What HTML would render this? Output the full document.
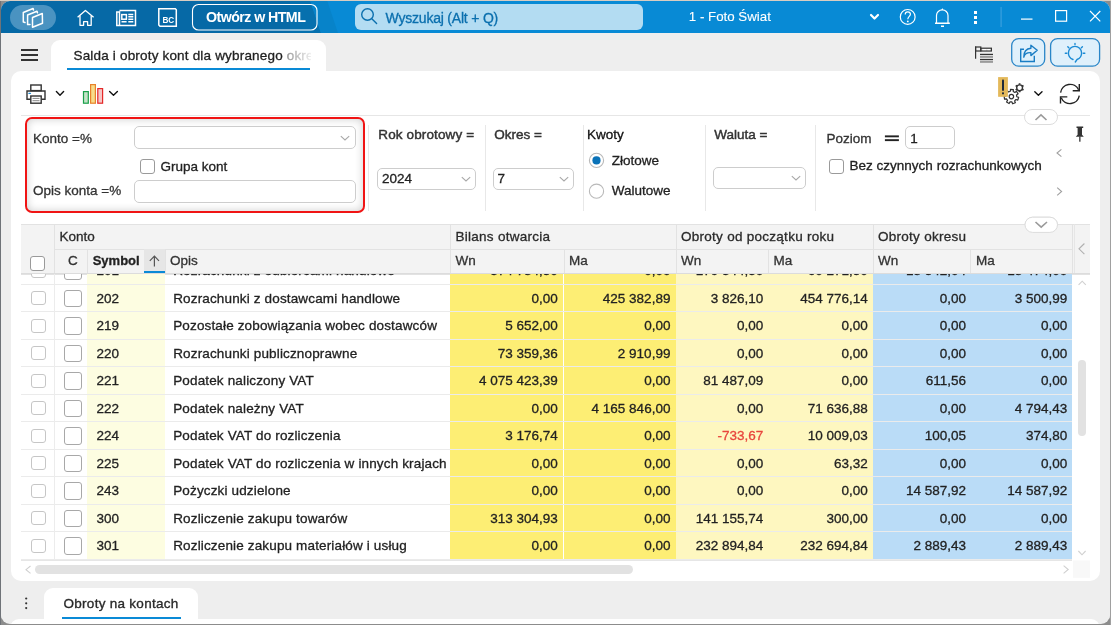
<!DOCTYPE html>
<html><head><meta charset="utf-8">
<style>
*{box-sizing:border-box;margin:0;padding:0}
html,body{width:1111px;height:625px;overflow:hidden;background:linear-gradient(#d8cdc2 0,#d8cdc2 1px,transparent 1px),linear-gradient(90deg,#6f7378 0,#6f7378 1px,transparent 1px,transparent 1110px,#a0a0a0 1110px),#8c8c8c;font-family:"Liberation Sans",sans-serif;font-size:13.5px;color:#222}
.a{position:absolute}
#win{position:absolute;left:1px;top:1px;width:1109px;height:623px;border-radius:9px;overflow:hidden;background:#eeeeee}
#c{position:absolute;left:-1px;top:-1px;width:1111px;height:625px;will-change:transform}
.t{position:absolute;white-space:nowrap;line-height:16px;height:16px;-webkit-text-stroke:0.3px currentColor}
svg.ov{position:absolute;left:0;top:0}
.inp{position:absolute;background:#fff;border:1px solid #cdcdcd;border-radius:5px}
.sep{position:absolute;width:1px;background:#e8e8e8}
.chk{position:absolute;border:1px solid #8c8c8c;border-radius:3px;background:#fff}
</style></head><body>
<div id="win"><div id="c">
<svg class="ov" width="1111" height="34">
<rect x="0" y="0" width="1111" height="33" fill="#088ad5"/>
<polygon points="0,0 310,0 321,33 0,33" fill="#0670ae"/>
<rect x="0" y="0" width="290" height="33" fill="#0669a6"/>
<polygon points="310,0 327,0 338,33 321,33" fill="#0783c9"/>
<rect x="10" y="5" width="46" height="25" rx="12.5" fill="#4a93c1"/>
<g fill="none" stroke="#fff" stroke-width="1.5" stroke-linejoin="round" stroke-linecap="round">
<path d="M32.5,17.5 L42.3,13.5 L42.5,23.3 L32.5,27.3 Z"/>
<path d="M30,24.4 L27.6,24.6 L27.6,15 L37,11.3 L37.5,12.7"/>
<path d="M25,22.5 L23.3,22.1 L23.3,12.5 L33.1,8.5 L33.5,10"/>
</g>
<g fill="none" stroke="#fff" stroke-width="1.3" stroke-linejoin="round">
<path d="M77.6,17.3 L85.4,10.5 L93.6,17.3"/>
<path d="M80,15.6 V25.3 H83.6 V21.7 H87.6 V25.3 H91.2 V15.6"/>
</g>
<g fill="none" stroke="#fff" stroke-width="1.5">
<path d="M119.5,10.5 H135.5 V25.5 H116.8 V12 H119.5 V25.5"/>
<rect x="121.8" y="14.6" width="4.6" height="4.6"/>
<path d="M128.3,14.4 H133.3 M128.3,16.8 H133.3 M128.3,19.3 H133.3 M121.5,21.8 H126.6 M128.3,21.8 H133.3"/>
<path d="M158.8,8.8 H175.3 L176.3,9.8 V26.2 H160 L158.8,25 Z"/>
</g>
<text x="168.3" y="23" fill="#fff" font-family="Liberation Sans" font-weight="bold" font-size="8.2" text-anchor="middle">BC</text>
<rect x="192.5" y="4.5" width="124.5" height="25.5" rx="6" fill="none" stroke="#fff" stroke-width="1.1"/>
<rect x="355" y="4" width="288" height="26" rx="6" fill="#b3dcf2"/>
<g fill="none" stroke="#0a6fae" stroke-width="1.4" stroke-linecap="round">
<circle cx="367.5" cy="14.5" r="5.8"/>
<path d="M371.8,18.8 L376.6,23.6"/>
</g>
<path d="M871,15 L874.5,18.5 L878,15" fill="none" stroke="#fff" stroke-width="2.2" stroke-linecap="round" stroke-linejoin="round"/>
<g fill="none" stroke="#fff" stroke-width="1.2">
<circle cx="907.7" cy="16.9" r="7.4"/>
<path d="M905.2,14.5 C905.2,12.5 906.4,11.8 907.8,11.8 C909.4,11.8 910.4,12.8 910.4,14.2 C910.4,16.2 907.8,16.6 907.8,19.2"/>
<path d="M936.5,23 V15.5 C936.5,12.2 939.2,9.9 942.3,9.9 C945.4,9.9 948,12.2 948,15.5 V23"/>
</g>
<circle cx="907.8" cy="21.4" r="0.9" fill="#fff"/>
<path d="M935,22.6 H949.8 V24.1 H935 Z M941,25.6 H944 V26.9 H941 Z M941.4,9.9 L942.3,8 L943.2,9.9 Z" fill="#fff"/>
<rect x="974" y="11" width="3" height="3" fill="#fff"/>
<rect x="974" y="16" width="3" height="3" fill="#fff"/>
<rect x="974" y="21" width="3" height="3" fill="#fff"/>
<rect x="1000.5" y="7" width="1.2" height="20" fill="#3aa0de"/>
<rect x="1021" y="18.5" width="11.5" height="1.2" fill="#fff"/>
<rect x="1055.6" y="10.6" width="11" height="10.6" fill="none" stroke="#fff" stroke-width="1.2"/>
<path d="M1090,11 L1100.3,21.3 M1100.3,11 L1090,21.3" stroke="#fff" stroke-width="1.2"/>
</svg>
<div class="t" style="left:206.00px;top:9.38px;font-size:14.2px;color:#fff;font-weight:bold;letter-spacing:-0.55px;-webkit-text-stroke:0">Otwórz w HTML</div><div class="t" style="left:385.50px;top:9.95px;font-size:14px;color:#0a6fae;font-weight:normal;letter-spacing:-0.2px">Wyszukaj (Alt + Q)</div><div class="t" style="left:688.80px;top:9.09px;font-size:13.3px;color:#fff;font-weight:normal;-webkit-text-stroke:0.1px #fff">1 - Foto Świat</div><div class="a" style="left:11px;top:71px;width:1089px;height:510px;background:#fff;border-radius:10px"></div>
<div class="a" style="left:51px;top:40px;width:275px;height:40px;background:#fff;border-radius:9px 9px 0 0"></div>
<div class="a" style="left:326px;top:33px;width:785px;height:38px;background:#eeeeee;border-bottom-left-radius:9px"></div>
<div class="a" style="left:67px;top:67.5px;width:243px;height:2px;background:#0a8ad6"></div>
<div class="t" style="left:73.50px;top:47.82px;font-size:13.5px;color:#222;font-weight:normal;letter-spacing:0.18px;width:237px;overflow:hidden;-webkit-mask-image:linear-gradient(90deg,#000 0,#000 208px,rgba(0,0,0,.45) 214px,rgba(0,0,0,.08) 237px)">Salda i obroty kont dla wybranego okre</div><svg class="ov" width="1111" height="130">
<rect x="21" y="49" width="17" height="2" fill="#333"/>
<rect x="21" y="54" width="17" height="2" fill="#333"/>
<rect x="21" y="59" width="17" height="2" fill="#333"/>
<!-- tree icon -->
<g fill="none" stroke="#333" stroke-width="1.2">
<path d="M975.6,46.5 V58.8"/>
<rect x="975.6" y="47" width="5.2" height="4"/>
<rect x="980.8" y="48.2" width="10.6" height="2.8"/>
</g>
<path d="M983,49.6 H986 M987.5,49.6 H990" stroke="#fff" stroke-width="1"/>
<rect x="980" y="53.8" width="13" height="1.3" fill="#333"/>
<rect x="980" y="56.3" width="13" height="1.3" fill="#777"/>
<rect x="980" y="58.9" width="13" height="1.3" fill="#333"/>
<rect x="980" y="61.3" width="13" height="1.3" fill="#777"/>
<!-- share btn -->
<rect x="1011.7" y="38.6" width="33" height="27.6" rx="7" fill="#dff0fb" stroke="#2a86c8" stroke-width="1.3"/>
<rect x="1050.6" y="38.6" width="49" height="27.6" rx="7" fill="#dff0fb" stroke="#2a86c8" stroke-width="1.3"/>
<g fill="none" stroke="#1a7dc4" stroke-width="1.4">
<path d="M1024,49.2 H1020.7 V61.5 H1034.3 V55.8"/>
<path d="M1023.8,57.2 C1024.6,53.6 1027.2,52.4 1030.9,52.6 L1030.9,55.6 L1037.2,50.3 L1030.9,45.2 L1030.9,48.3 C1026.4,48.6 1023.8,51.6 1023.8,57.2 Z" stroke-linejoin="round"/>
</g>
<g fill="none" stroke="#1a8ad4" stroke-width="1.4" stroke-linecap="round">
<path d="M1075.3,62 L1077,59.5 C1079.8,58.5 1081.6,56 1081.6,53 C1081.6,49.2 1078.6,46.4 1075,46.4 C1071.4,46.4 1068.4,49.2 1068.4,53 C1068.4,56 1070.3,58.5 1073,59.5"/>
<path d="M1075,43.4 V44.6 M1065.3,53.3 H1066.8 M1083.3,53.3 H1084.8 M1067.8,46.8 L1068.8,47.8 M1082.4,46.8 L1081.4,47.8"/>
</g>
<!-- printer -->
<g fill="none" stroke="#333" stroke-width="1.4">
<rect x="30.8" y="85" width="10.4" height="5.6"/>
<path d="M30.5,99.3 H27 V91 H45 V99.3 H41.5"/>
<rect x="30.8" y="96" width="10.4" height="7.2"/>
</g>
<path d="M32.5,98.4 H39.5 M32.5,100.7 H39.5" stroke="#888" stroke-width="1"/>
<rect x="28.3" y="92.8" width="2.7" height="1.2" rx="0.6" fill="#1a8ad4"/>
<g fill="none" stroke="#111" stroke-width="1.4" stroke-linecap="round" stroke-linejoin="round">
<path d="M56.4,91.6 L60,95.2 L63.6,91.6"/>
<path d="M109.6,91.6 L113.5,95.3 L117.4,91.6"/>
<path d="M1034.8,91.8 L1038.4,95.2 L1042,91.8"/>
</g>
<!-- chart -->
<rect x="83.5" y="91.6" width="4.8" height="11.6" fill="#c5e3c8" stroke="#1aa04a" stroke-width="1.2"/>
<rect x="90.6" y="84.6" width="4.8" height="18.6" fill="#f7dd8a" stroke="#e8822a" stroke-width="1.2"/>
<rect x="97.8" y="88.6" width="4.8" height="14.6" fill="#f5c6c6" stroke="#e42828" stroke-width="1.2"/>
<!-- gears -->
<g fill="none" stroke="#333" stroke-width="1.2">
<circle cx="1011.4" cy="96.6" r="2.2"/>
</g>
<path d="M1016.80,96.74 L1018.66,97.31 L1017.80,100.11 L1015.94,99.53 L1014.65,100.91 L1015.37,102.73 L1012.64,103.79 L1011.94,101.97 L1010.06,101.83 L1009.09,103.52 L1006.55,102.06 L1007.53,100.37 L1006.47,98.81 L1004.54,99.11 L1004.11,96.21 L1006.04,95.93 L1006.60,94.13 L1005.16,92.80 L1007.16,90.66 L1008.59,91.99 L1010.34,91.31 L1010.48,89.36 L1013.40,89.58 L1013.25,91.53 L1014.88,92.47 L1016.49,91.37 L1018.14,93.79 L1016.52,94.88 Z" fill="none" stroke="#333" stroke-width="1.2" stroke-linejoin="round"/>
<circle cx="1019.6" cy="87.8" r="2.9" fill="#fff" stroke="#333" stroke-width="1.4"/><path d="M1022.20,89.30 L1023.50,90.05 M1019.60,90.80 L1019.60,92.30 M1017.00,89.30 L1015.70,90.05 M1017.00,86.30 L1015.70,85.55 M1019.60,84.80 L1019.60,83.30 M1022.20,86.30 L1023.50,85.55" stroke="#333" stroke-width="1.8"/>

<rect x="998.1" y="77.1" width="9.8" height="19.7" fill="#e4b95a"/>
<rect x="1002" y="79.6" width="2" height="11.3" rx="0.8" fill="#1e2a3a"/>
<rect x="1002" y="92.2" width="2" height="2.2" rx="0.8" fill="#1e2a3a"/>
<!-- refresh -->
<g fill="none" stroke="#222" stroke-width="1.4">
<path d="M1060.6,92.6 A9.5,9.5 0 0 1 1078.6,89.8"/>
<path d="M1079.3,84.1 V90.8 H1072.7"/>
<path d="M1079.3,95.6 A9.5,9.5 0 0 1 1061.2,97.8"/>
<path d="M1060.5,103.6 V96.9 H1067.3"/>
</g>
<!-- filter top line + collapse pill -->
<rect x="21" y="115" width="1069" height="1" fill="#e6e6e6"/>
<rect x="1024.5" y="109.5" width="33" height="15" rx="7.5" fill="#fff" stroke="#dcdcdc" stroke-width="1"/>
<path d="M1035.5,120 L1041,114.8 L1046.5,120" fill="none" stroke="#9a9a9a" stroke-width="1.6"/>
</svg>
<div class="a" style="left:24.5px;top:117px;width:340px;height:96px;border:2px solid #f01414;border-radius:7px;box-shadow:inset 0 0 8px rgba(0,0,0,.2)"></div><div class="t" style="left:33.00px;top:130.52px;font-size:13.5px;color:#333;font-weight:normal;">Konto =%</div><div class="inp" style="left:133.5px;top:126.3px;width:222.2px;height:23.200000000000003px"></div><svg class="ov" style="left:340.2px;top:133.9px" width="10" height="8"><path d="M0.8,2.2 L5,6 L9.2,2.2" fill="none" stroke="#a8a8a8" stroke-width="1.1"/></svg><div class="chk" style="left:140px;top:159.4px;width:14.5px;height:14.5px;border-radius:3px;border-color:#9a9a9a"></div><div class="t" style="left:160.50px;top:158.82px;font-size:13.5px;color:#222;font-weight:normal;">Grupa kont</div><div class="t" style="left:33.00px;top:183.22px;font-size:13.5px;color:#333;font-weight:normal;">Opis konta =%</div><div class="inp" style="left:133.5px;top:179.5px;width:222.2px;height:23.0px"></div><div class="sep" style="left:368px;top:124.6px;height:86.4px;background:#e8e8e8"></div><div class="t" style="left:378.30px;top:127.22px;font-size:13.5px;color:#333;font-weight:normal;-webkit-text-stroke:0.45px #333;letter-spacing:0.12px">Rok obrotowy =</div><div class="inp" style="left:377.3px;top:167.5px;width:99.19999999999999px;height:22.19999999999999px"></div><svg class="ov" style="left:461.0px;top:174.6px" width="10" height="8"><path d="M0.8,2.2 L5,6 L9.2,2.2" fill="none" stroke="#a8a8a8" stroke-width="1.1"/></svg><div class="t" style="left:382.00px;top:171.02px;font-size:13.5px;color:#222;font-weight:normal;">2024</div><div class="sep" style="left:484.5px;top:124.6px;height:86.4px;background:#e8e8e8"></div><div class="t" style="left:494.30px;top:127.22px;font-size:13.5px;color:#333;font-weight:normal;-webkit-text-stroke:0.45px #333">Okres =</div><div class="inp" style="left:493.4px;top:167.5px;width:81.0px;height:22.19999999999999px"></div><svg class="ov" style="left:558.9px;top:174.6px" width="10" height="8"><path d="M0.8,2.2 L5,6 L9.2,2.2" fill="none" stroke="#a8a8a8" stroke-width="1.1"/></svg><div class="t" style="left:497.50px;top:171.02px;font-size:13.5px;color:#222;font-weight:normal;">7</div><div class="sep" style="left:582.5px;top:124.6px;height:86.4px;background:#e8e8e8"></div><div class="t" style="left:587.00px;top:127.22px;font-size:13.5px;color:#111;font-weight:normal;">Kwoty</div><svg class="ov" width="1111" height="240">
<circle cx="596.5" cy="160.4" r="7.1" fill="#fff" stroke="#b9b9b9" stroke-width="1.1"/>
<circle cx="596.5" cy="160.4" r="4.1" fill="#0a72b8"/>
<circle cx="596.5" cy="191.2" r="7.1" fill="#fff" stroke="#b9b9b9" stroke-width="1.1"/>
<rect x="884.9" y="135.4" width="14" height="1.9" fill="#222"/>
<rect x="884.9" y="139.2" width="14" height="1.9" fill="#222"/>
<path d="M1061.4,149.3 L1057,153 L1061.4,156.7" fill="none" stroke="#a0a0a0" stroke-width="1.1"/>
<path d="M1057.2,187.6 L1061.6,191.5 L1057.2,195.4" fill="none" stroke="#a0a0a0" stroke-width="1.1"/>
<path d="M1076.5,126.5 H1083.2 V128 H1082 V134.8 L1083.8,136.8 H1075.8 L1077.6,134.8 V128 H1076.5 Z" fill="#333"/>
<rect x="1079.2" y="136.5" width="1.3" height="5.2" fill="#333"/>
<rect x="1025" y="217.2" width="32.5" height="15.2" rx="7.6" fill="#fff" stroke="#dcdcdc" stroke-width="1"/>
<path d="M1035.5,222 L1041.2,227.2 L1047,222" fill="none" stroke="#9a9a9a" stroke-width="1.6"/>
</svg>
<div class="t" style="left:611.70px;top:152.72px;font-size:13.5px;color:#222;font-weight:normal;">Złotowe</div><div class="t" style="left:611.70px;top:183.32px;font-size:13.5px;color:#222;font-weight:normal;">Walutowe</div><div class="sep" style="left:704.6px;top:124.6px;height:86.4px;background:#e8e8e8"></div><div class="t" style="left:714.30px;top:126.82px;font-size:13.5px;color:#333;font-weight:normal;-webkit-text-stroke:0.45px #333">Waluta =</div><div class="inp" style="left:713.2px;top:167.3px;width:93.29999999999995px;height:22.19999999999999px"></div><svg class="ov" style="left:791.0px;top:174.4px" width="10" height="8"><path d="M0.8,2.2 L5,6 L9.2,2.2" fill="none" stroke="#a8a8a8" stroke-width="1.1"/></svg><div class="sep" style="left:814.5px;top:124.6px;height:86.4px;background:#e8e8e8"></div><div class="t" style="left:826.60px;top:130.82px;font-size:13.5px;color:#333;font-weight:normal;">Poziom</div><div class="inp" style="left:905.3px;top:126.2px;width:50.10000000000002px;height:23.10000000000001px"></div><div class="t" style="left:910.30px;top:131.02px;font-size:13.5px;color:#222;font-weight:normal;">1</div><div class="chk" style="left:829.3px;top:159.4px;width:14.5px;height:14.5px;border-radius:3px;border-color:#9a9a9a"></div><div class="t" style="left:849.60px;top:158.42px;font-size:13.5px;color:#222;font-weight:normal;">Bez czynnych rozrachunkowych</div><div class="a" style="left:21px;top:224.3px;width:1069px;height:49.69999999999999px;background:#f3f3f3"></div><div class="a" style="left:21px;top:224.3px;width:1069.00px;height:1px;background:#e2e2e2"></div><div class="a" style="left:54.4px;top:248.5px;width:1017.60px;height:1px;background:#e2e2e2"></div><div class="a" style="left:21px;top:273.5px;width:1069.00px;height:1px;background:#e2e2e2"></div><div class="a" style="left:54.4px;top:224.3px;width:1px;height:49.70px;background:#e2e2e2"></div><div class="a" style="left:450.2px;top:224.3px;width:1px;height:49.70px;background:#e2e2e2"></div><div class="a" style="left:675.5px;top:224.3px;width:1px;height:49.70px;background:#e2e2e2"></div><div class="a" style="left:872.5px;top:224.3px;width:1px;height:49.70px;background:#e2e2e2"></div><div class="a" style="left:86.7px;top:248.5px;width:1px;height:25.50px;background:#e2e2e2"></div><div class="a" style="left:164.8px;top:248.5px;width:1px;height:25.50px;background:#e2e2e2"></div><div class="a" style="left:563.7px;top:248.5px;width:1px;height:25.50px;background:#e2e2e2"></div><div class="a" style="left:768.3px;top:248.5px;width:1px;height:25.50px;background:#e2e2e2"></div><div class="a" style="left:970.4px;top:248.5px;width:1px;height:25.50px;background:#e2e2e2"></div><div class="a" style="left:1072px;top:224.3px;width:1px;height:49.70px;background:#e2e2e2"></div><div class="a" style="left:1073.5px;top:224.3px;width:1px;height:49.70px;background:#e6e6e6"></div><div class="a" style="left:144px;top:249px;width:20.8px;height:24.5px;background:#e6e6e6"></div><div class="a" style="left:144px;top:270.8px;width:20.8px;height:2.4px;background:#0a8ad6"></div><svg class="ov" width="1111" height="290">
<path d="M154.4,266.5 V256.3 M149.8,260.8 L154.4,256.2 L159,260.8" fill="none" stroke="#555" stroke-width="1.2"/>
<path d="M1084.4,243.5 L1079,248.8 L1084.4,254.2" fill="none" stroke="#b0b0b0" stroke-width="1.1"/>
</svg><div class="chk" style="left:30.3px;top:256px;width:14.8px;height:14.8px;border-radius:3px;border-color:#9a9a9a"></div><div class="t" style="left:59.40px;top:228.82px;font-size:13.5px;color:#2a2a2a;font-weight:normal;-webkit-text-stroke:0.3px #2a2a2a">Konto</div><div class="t" style="left:455.50px;top:228.82px;font-size:13.5px;color:#2a2a2a;font-weight:normal;-webkit-text-stroke:0.3px #2a2a2a;letter-spacing:0.27px">Bilans otwarcia</div><div class="t" style="left:681.00px;top:228.82px;font-size:13.5px;color:#2a2a2a;font-weight:normal;-webkit-text-stroke:0.3px #2a2a2a;letter-spacing:0.27px">Obroty od początku roku</div><div class="t" style="left:878.00px;top:228.82px;font-size:13.5px;color:#2a2a2a;font-weight:normal;-webkit-text-stroke:0.3px #2a2a2a;letter-spacing:0.27px">Obroty okresu</div><div class="t" style="left:68.00px;top:253.02px;font-size:13.5px;color:#333;font-weight:normal;">C</div><div class="t" style="left:92.70px;top:253.20px;font-size:13px;color:#222;font-weight:bold;">Symbol</div><div class="t" style="left:170.00px;top:253.02px;font-size:13.5px;color:#333;font-weight:normal;">Opis</div><div class="t" style="left:455.50px;top:253.02px;font-size:13.5px;color:#333;font-weight:normal;">Wn</div><div class="t" style="left:569.00px;top:253.02px;font-size:13.5px;color:#333;font-weight:normal;">Ma</div><div class="t" style="left:681.00px;top:253.02px;font-size:13.5px;color:#333;font-weight:normal;">Wn</div><div class="t" style="left:773.50px;top:253.02px;font-size:13.5px;color:#333;font-weight:normal;">Ma</div><div class="t" style="left:878.00px;top:253.02px;font-size:13.5px;color:#333;font-weight:normal;">Wn</div><div class="t" style="left:976.00px;top:253.02px;font-size:13.5px;color:#333;font-weight:normal;">Ma</div><div class="a" style="left:21px;top:274px;width:1051px;height:286.4px;overflow:hidden"><div class="a" style="left:-21px;top:-274px;width:1111px;height:625px"><div class="a" style="left:87px;top:256.90px;width:78px;height:27.5px;background:#fdfde1"></div><div class="a" style="left:450px;top:256.90px;width:226px;height:27.5px;background:#fdee74"></div><div class="a" style="left:676px;top:256.90px;width:197px;height:27.5px;background:#fef7c0"></div><div class="a" style="left:873px;top:256.90px;width:199px;height:27.5px;background:#badcf7"></div><div class="a" style="left:87px;top:284.40px;width:78px;height:27.5px;background:#fdfde1"></div><div class="a" style="left:450px;top:284.40px;width:226px;height:27.5px;background:#fdee74"></div><div class="a" style="left:676px;top:284.40px;width:197px;height:27.5px;background:#fef7c0"></div><div class="a" style="left:873px;top:284.40px;width:199px;height:27.5px;background:#badcf7"></div><div class="a" style="left:87px;top:311.90px;width:78px;height:27.5px;background:#fdfde1"></div><div class="a" style="left:450px;top:311.90px;width:226px;height:27.5px;background:#fdee74"></div><div class="a" style="left:676px;top:311.90px;width:197px;height:27.5px;background:#fef7c0"></div><div class="a" style="left:873px;top:311.90px;width:199px;height:27.5px;background:#badcf7"></div><div class="a" style="left:87px;top:339.40px;width:78px;height:27.5px;background:#fdfde1"></div><div class="a" style="left:450px;top:339.40px;width:226px;height:27.5px;background:#fdee74"></div><div class="a" style="left:676px;top:339.40px;width:197px;height:27.5px;background:#fef7c0"></div><div class="a" style="left:873px;top:339.40px;width:199px;height:27.5px;background:#badcf7"></div><div class="a" style="left:87px;top:366.90px;width:78px;height:27.5px;background:#fdfde1"></div><div class="a" style="left:450px;top:366.90px;width:226px;height:27.5px;background:#fdee74"></div><div class="a" style="left:676px;top:366.90px;width:197px;height:27.5px;background:#fef7c0"></div><div class="a" style="left:873px;top:366.90px;width:199px;height:27.5px;background:#badcf7"></div><div class="a" style="left:87px;top:394.40px;width:78px;height:27.5px;background:#fdfde1"></div><div class="a" style="left:450px;top:394.40px;width:226px;height:27.5px;background:#fdee74"></div><div class="a" style="left:676px;top:394.40px;width:197px;height:27.5px;background:#fef7c0"></div><div class="a" style="left:873px;top:394.40px;width:199px;height:27.5px;background:#badcf7"></div><div class="a" style="left:87px;top:421.90px;width:78px;height:27.5px;background:#fdfde1"></div><div class="a" style="left:450px;top:421.90px;width:226px;height:27.5px;background:#fdee74"></div><div class="a" style="left:676px;top:421.90px;width:197px;height:27.5px;background:#fef7c0"></div><div class="a" style="left:873px;top:421.90px;width:199px;height:27.5px;background:#badcf7"></div><div class="a" style="left:87px;top:449.40px;width:78px;height:27.5px;background:#fdfde1"></div><div class="a" style="left:450px;top:449.40px;width:226px;height:27.5px;background:#fdee74"></div><div class="a" style="left:676px;top:449.40px;width:197px;height:27.5px;background:#fef7c0"></div><div class="a" style="left:873px;top:449.40px;width:199px;height:27.5px;background:#badcf7"></div><div class="a" style="left:87px;top:476.90px;width:78px;height:27.5px;background:#fdfde1"></div><div class="a" style="left:450px;top:476.90px;width:226px;height:27.5px;background:#fdee74"></div><div class="a" style="left:676px;top:476.90px;width:197px;height:27.5px;background:#fef7c0"></div><div class="a" style="left:873px;top:476.90px;width:199px;height:27.5px;background:#badcf7"></div><div class="a" style="left:87px;top:504.40px;width:78px;height:27.5px;background:#fdfde1"></div><div class="a" style="left:450px;top:504.40px;width:226px;height:27.5px;background:#fdee74"></div><div class="a" style="left:676px;top:504.40px;width:197px;height:27.5px;background:#fef7c0"></div><div class="a" style="left:873px;top:504.40px;width:199px;height:27.5px;background:#badcf7"></div><div class="a" style="left:87px;top:531.90px;width:78px;height:27.5px;background:#fdfde1"></div><div class="a" style="left:450px;top:531.90px;width:226px;height:27.5px;background:#fdee74"></div><div class="a" style="left:676px;top:531.90px;width:197px;height:27.5px;background:#fef7c0"></div><div class="a" style="left:873px;top:531.90px;width:199px;height:27.5px;background:#badcf7"></div><div class="a" style="left:563px;top:256px;width:1px;height:310px;background:#fff"></div><div class="a" style="left:21px;top:284px;width:1051px;height:1px;background:#ebebeb"></div><div class="a" style="left:21px;top:311px;width:1051px;height:1px;background:#ebebeb"></div><div class="a" style="left:21px;top:339px;width:1051px;height:1px;background:#ebebeb"></div><div class="a" style="left:21px;top:366px;width:1051px;height:1px;background:#ebebeb"></div><div class="a" style="left:21px;top:394px;width:1051px;height:1px;background:#ebebeb"></div><div class="a" style="left:21px;top:421px;width:1051px;height:1px;background:#ebebeb"></div><div class="a" style="left:21px;top:449px;width:1051px;height:1px;background:#ebebeb"></div><div class="a" style="left:21px;top:476px;width:1051px;height:1px;background:#ebebeb"></div><div class="a" style="left:21px;top:504px;width:1051px;height:1px;background:#ebebeb"></div><div class="a" style="left:21px;top:531px;width:1051px;height:1px;background:#ebebeb"></div><div class="a" style="left:21px;top:559px;width:1051px;height:1px;background:#ebebeb"></div><div class="chk" style="left:31.2px;top:263.5px;width:14.4px;height:14.4px;border-radius:3px;border-color:#c6c6c6"></div><div class="chk" style="left:64.2px;top:262.0px;width:17.8px;height:17.8px;border-radius:3px;border-color:#a8a8a8"></div><div class="t" style="left:96.50px;top:263.32px;font-size:13.5px;color:#222;font-weight:normal;">201</div><div class="t" style="left:173.20px;top:263.32px;font-size:13.5px;color:#222;font-weight:normal;letter-spacing:0.15px">Rozrachunki z odbiorcami handlowe</div><div class="t" style="right:553.20px;top:263.32px;font-size:13.5px;color:#222;font-weight:normal;">374 784,50</div><div class="t" style="right:440.60px;top:263.32px;font-size:13.5px;color:#222;font-weight:normal;">0,00</div><div class="t" style="right:347.80px;top:263.32px;font-size:13.5px;color:#222;font-weight:normal;">179 344,50</div><div class="t" style="right:243.30px;top:263.32px;font-size:13.5px;color:#222;font-weight:normal;">60 271,50</div><div class="t" style="right:145.00px;top:263.32px;font-size:13.5px;color:#222;font-weight:normal;">18 542,04</div><div class="t" style="right:43.80px;top:263.32px;font-size:13.5px;color:#222;font-weight:normal;">18 474,00</div><div class="chk" style="left:31.2px;top:291.0px;width:14.4px;height:14.4px;border-radius:3px;border-color:#c6c6c6"></div><div class="chk" style="left:64.2px;top:289.5px;width:17.8px;height:17.8px;border-radius:3px;border-color:#a8a8a8"></div><div class="t" style="left:96.50px;top:290.82px;font-size:13.5px;color:#222;font-weight:normal;">202</div><div class="t" style="left:173.20px;top:290.82px;font-size:13.5px;color:#222;font-weight:normal;letter-spacing:0.15px">Rozrachunki z dostawcami handlowe</div><div class="t" style="right:553.20px;top:290.82px;font-size:13.5px;color:#222;font-weight:normal;">0,00</div><div class="t" style="right:440.60px;top:290.82px;font-size:13.5px;color:#222;font-weight:normal;">425 382,89</div><div class="t" style="right:347.80px;top:290.82px;font-size:13.5px;color:#222;font-weight:normal;">3 826,10</div><div class="t" style="right:243.30px;top:290.82px;font-size:13.5px;color:#222;font-weight:normal;">454 776,14</div><div class="t" style="right:145.00px;top:290.82px;font-size:13.5px;color:#222;font-weight:normal;">0,00</div><div class="t" style="right:43.80px;top:290.82px;font-size:13.5px;color:#222;font-weight:normal;">3 500,99</div><div class="chk" style="left:31.2px;top:318.5px;width:14.4px;height:14.4px;border-radius:3px;border-color:#c6c6c6"></div><div class="chk" style="left:64.2px;top:317.0px;width:17.8px;height:17.8px;border-radius:3px;border-color:#a8a8a8"></div><div class="t" style="left:96.50px;top:318.32px;font-size:13.5px;color:#222;font-weight:normal;">219</div><div class="t" style="left:173.20px;top:318.32px;font-size:13.5px;color:#222;font-weight:normal;letter-spacing:0.15px">Pozostałe zobowiązania wobec dostawców</div><div class="t" style="right:553.20px;top:318.32px;font-size:13.5px;color:#222;font-weight:normal;">5 652,00</div><div class="t" style="right:440.60px;top:318.32px;font-size:13.5px;color:#222;font-weight:normal;">0,00</div><div class="t" style="right:347.80px;top:318.32px;font-size:13.5px;color:#222;font-weight:normal;">0,00</div><div class="t" style="right:243.30px;top:318.32px;font-size:13.5px;color:#222;font-weight:normal;">0,00</div><div class="t" style="right:145.00px;top:318.32px;font-size:13.5px;color:#222;font-weight:normal;">0,00</div><div class="t" style="right:43.80px;top:318.32px;font-size:13.5px;color:#222;font-weight:normal;">0,00</div><div class="chk" style="left:31.2px;top:346.0px;width:14.4px;height:14.4px;border-radius:3px;border-color:#c6c6c6"></div><div class="chk" style="left:64.2px;top:344.5px;width:17.8px;height:17.8px;border-radius:3px;border-color:#a8a8a8"></div><div class="t" style="left:96.50px;top:345.82px;font-size:13.5px;color:#222;font-weight:normal;">220</div><div class="t" style="left:173.20px;top:345.82px;font-size:13.5px;color:#222;font-weight:normal;letter-spacing:0.15px">Rozrachunki publicznoprawne</div><div class="t" style="right:553.20px;top:345.82px;font-size:13.5px;color:#222;font-weight:normal;">73 359,36</div><div class="t" style="right:440.60px;top:345.82px;font-size:13.5px;color:#222;font-weight:normal;">2 910,99</div><div class="t" style="right:347.80px;top:345.82px;font-size:13.5px;color:#222;font-weight:normal;">0,00</div><div class="t" style="right:243.30px;top:345.82px;font-size:13.5px;color:#222;font-weight:normal;">0,00</div><div class="t" style="right:145.00px;top:345.82px;font-size:13.5px;color:#222;font-weight:normal;">0,00</div><div class="t" style="right:43.80px;top:345.82px;font-size:13.5px;color:#222;font-weight:normal;">0,00</div><div class="chk" style="left:31.2px;top:373.5px;width:14.4px;height:14.4px;border-radius:3px;border-color:#c6c6c6"></div><div class="chk" style="left:64.2px;top:372.0px;width:17.8px;height:17.8px;border-radius:3px;border-color:#a8a8a8"></div><div class="t" style="left:96.50px;top:373.32px;font-size:13.5px;color:#222;font-weight:normal;">221</div><div class="t" style="left:173.20px;top:373.32px;font-size:13.5px;color:#222;font-weight:normal;letter-spacing:0.15px">Podatek naliczony VAT</div><div class="t" style="right:553.20px;top:373.32px;font-size:13.5px;color:#222;font-weight:normal;">4 075 423,39</div><div class="t" style="right:440.60px;top:373.32px;font-size:13.5px;color:#222;font-weight:normal;">0,00</div><div class="t" style="right:347.80px;top:373.32px;font-size:13.5px;color:#222;font-weight:normal;">81 487,09</div><div class="t" style="right:243.30px;top:373.32px;font-size:13.5px;color:#222;font-weight:normal;">0,00</div><div class="t" style="right:145.00px;top:373.32px;font-size:13.5px;color:#222;font-weight:normal;">611,56</div><div class="t" style="right:43.80px;top:373.32px;font-size:13.5px;color:#222;font-weight:normal;">0,00</div><div class="chk" style="left:31.2px;top:401.0px;width:14.4px;height:14.4px;border-radius:3px;border-color:#c6c6c6"></div><div class="chk" style="left:64.2px;top:399.5px;width:17.8px;height:17.8px;border-radius:3px;border-color:#a8a8a8"></div><div class="t" style="left:96.50px;top:400.82px;font-size:13.5px;color:#222;font-weight:normal;">222</div><div class="t" style="left:173.20px;top:400.82px;font-size:13.5px;color:#222;font-weight:normal;letter-spacing:0.15px">Podatek należny VAT</div><div class="t" style="right:553.20px;top:400.82px;font-size:13.5px;color:#222;font-weight:normal;">0,00</div><div class="t" style="right:440.60px;top:400.82px;font-size:13.5px;color:#222;font-weight:normal;">4 165 846,00</div><div class="t" style="right:347.80px;top:400.82px;font-size:13.5px;color:#222;font-weight:normal;">0,00</div><div class="t" style="right:243.30px;top:400.82px;font-size:13.5px;color:#222;font-weight:normal;">71 636,88</div><div class="t" style="right:145.00px;top:400.82px;font-size:13.5px;color:#222;font-weight:normal;">0,00</div><div class="t" style="right:43.80px;top:400.82px;font-size:13.5px;color:#222;font-weight:normal;">4 794,43</div><div class="chk" style="left:31.2px;top:428.5px;width:14.4px;height:14.4px;border-radius:3px;border-color:#c6c6c6"></div><div class="chk" style="left:64.2px;top:427.0px;width:17.8px;height:17.8px;border-radius:3px;border-color:#a8a8a8"></div><div class="t" style="left:96.50px;top:428.32px;font-size:13.5px;color:#222;font-weight:normal;">224</div><div class="t" style="left:173.20px;top:428.32px;font-size:13.5px;color:#222;font-weight:normal;letter-spacing:0.15px">Podatek VAT do rozliczenia</div><div class="t" style="right:553.20px;top:428.32px;font-size:13.5px;color:#222;font-weight:normal;">3 176,74</div><div class="t" style="right:440.60px;top:428.32px;font-size:13.5px;color:#222;font-weight:normal;">0,00</div><div class="t" style="right:347.80px;top:428.32px;font-size:13.5px;color:#e8453c;font-weight:normal;">-733,67</div><div class="t" style="right:243.30px;top:428.32px;font-size:13.5px;color:#222;font-weight:normal;">10 009,03</div><div class="t" style="right:145.00px;top:428.32px;font-size:13.5px;color:#222;font-weight:normal;">100,05</div><div class="t" style="right:43.80px;top:428.32px;font-size:13.5px;color:#222;font-weight:normal;">374,80</div><div class="chk" style="left:31.2px;top:456.0px;width:14.4px;height:14.4px;border-radius:3px;border-color:#c6c6c6"></div><div class="chk" style="left:64.2px;top:454.5px;width:17.8px;height:17.8px;border-radius:3px;border-color:#a8a8a8"></div><div class="t" style="left:96.50px;top:455.82px;font-size:13.5px;color:#222;font-weight:normal;">225</div><div class="t" style="left:173.20px;top:455.82px;font-size:13.5px;color:#222;font-weight:normal;letter-spacing:0.15px">Podatek VAT do rozliczenia w innych krajach</div><div class="t" style="right:553.20px;top:455.82px;font-size:13.5px;color:#222;font-weight:normal;">0,00</div><div class="t" style="right:440.60px;top:455.82px;font-size:13.5px;color:#222;font-weight:normal;">0,00</div><div class="t" style="right:347.80px;top:455.82px;font-size:13.5px;color:#222;font-weight:normal;">0,00</div><div class="t" style="right:243.30px;top:455.82px;font-size:13.5px;color:#222;font-weight:normal;">63,32</div><div class="t" style="right:145.00px;top:455.82px;font-size:13.5px;color:#222;font-weight:normal;">0,00</div><div class="t" style="right:43.80px;top:455.82px;font-size:13.5px;color:#222;font-weight:normal;">0,00</div><div class="chk" style="left:31.2px;top:483.5px;width:14.4px;height:14.4px;border-radius:3px;border-color:#c6c6c6"></div><div class="chk" style="left:64.2px;top:482.0px;width:17.8px;height:17.8px;border-radius:3px;border-color:#a8a8a8"></div><div class="t" style="left:96.50px;top:483.32px;font-size:13.5px;color:#222;font-weight:normal;">243</div><div class="t" style="left:173.20px;top:483.32px;font-size:13.5px;color:#222;font-weight:normal;letter-spacing:0.15px">Pożyczki udzielone</div><div class="t" style="right:553.20px;top:483.32px;font-size:13.5px;color:#222;font-weight:normal;">0,00</div><div class="t" style="right:440.60px;top:483.32px;font-size:13.5px;color:#222;font-weight:normal;">0,00</div><div class="t" style="right:347.80px;top:483.32px;font-size:13.5px;color:#222;font-weight:normal;">0,00</div><div class="t" style="right:243.30px;top:483.32px;font-size:13.5px;color:#222;font-weight:normal;">0,00</div><div class="t" style="right:145.00px;top:483.32px;font-size:13.5px;color:#222;font-weight:normal;">14 587,92</div><div class="t" style="right:43.80px;top:483.32px;font-size:13.5px;color:#222;font-weight:normal;">14 587,92</div><div class="chk" style="left:31.2px;top:511.0px;width:14.4px;height:14.4px;border-radius:3px;border-color:#c6c6c6"></div><div class="chk" style="left:64.2px;top:509.5px;width:17.8px;height:17.8px;border-radius:3px;border-color:#a8a8a8"></div><div class="t" style="left:96.50px;top:510.82px;font-size:13.5px;color:#222;font-weight:normal;">300</div><div class="t" style="left:173.20px;top:510.82px;font-size:13.5px;color:#222;font-weight:normal;letter-spacing:0.15px">Rozliczenie zakupu towarów</div><div class="t" style="right:553.20px;top:510.82px;font-size:13.5px;color:#222;font-weight:normal;">313 304,93</div><div class="t" style="right:440.60px;top:510.82px;font-size:13.5px;color:#222;font-weight:normal;">0,00</div><div class="t" style="right:347.80px;top:510.82px;font-size:13.5px;color:#222;font-weight:normal;">141 155,74</div><div class="t" style="right:243.30px;top:510.82px;font-size:13.5px;color:#222;font-weight:normal;">300,00</div><div class="t" style="right:145.00px;top:510.82px;font-size:13.5px;color:#222;font-weight:normal;">0,00</div><div class="t" style="right:43.80px;top:510.82px;font-size:13.5px;color:#222;font-weight:normal;">0,00</div><div class="chk" style="left:31.2px;top:538.5px;width:14.4px;height:14.4px;border-radius:3px;border-color:#c6c6c6"></div><div class="chk" style="left:64.2px;top:537.0px;width:17.8px;height:17.8px;border-radius:3px;border-color:#a8a8a8"></div><div class="t" style="left:96.50px;top:538.32px;font-size:13.5px;color:#222;font-weight:normal;">301</div><div class="t" style="left:173.20px;top:538.32px;font-size:13.5px;color:#222;font-weight:normal;letter-spacing:0.15px">Rozliczenie zakupu materiałów i usług</div><div class="t" style="right:553.20px;top:538.32px;font-size:13.5px;color:#222;font-weight:normal;">0,00</div><div class="t" style="right:440.60px;top:538.32px;font-size:13.5px;color:#222;font-weight:normal;">0,00</div><div class="t" style="right:347.80px;top:538.32px;font-size:13.5px;color:#222;font-weight:normal;">232 894,84</div><div class="t" style="right:243.30px;top:538.32px;font-size:13.5px;color:#222;font-weight:normal;">232 694,84</div><div class="t" style="right:145.00px;top:538.32px;font-size:13.5px;color:#222;font-weight:normal;">2 889,43</div><div class="t" style="right:43.80px;top:538.32px;font-size:13.5px;color:#222;font-weight:normal;">2 889,43</div></div></div><div class="a" style="left:54.4px;top:274px;width:1px;height:286.40px;background:#ececec"></div><div class="a" style="left:21px;top:559.6px;width:1051.00px;height:1px;background:#e6e6e6"></div><div class="a" style="left:21px;top:273px;width:1069.00px;height:1px;background:#dcdcdc"></div><div class="a" style="left:44px;top:588px;width:154px;height:40px;background:#fff;border-radius:9px 9px 0 0"></div><div class="a" style="left:198px;top:581px;width:913px;height:38px;background:#eeeeee;border-bottom-left-radius:9px"></div><div class="a" style="left:0px;top:581px;width:44px;height:38px;background:#eeeeee;border-bottom-right-radius:9px"></div><div class="a" style="left:10px;top:619px;width:1090px;height:10px;background:#fff;border-radius:9px 9px 0 0"></div><svg class="ov" width="1111" height="625">
<path d="M1078.6,284.8 L1082.2,281.2 L1085.8,284.8" fill="none" stroke="#d0d0d0" stroke-width="1.1"/>
<rect x="1078" y="360" width="8" height="76" rx="4" fill="#e2e2e2"/>
<path d="M1078.4,551 L1082,554.8 L1085.6,551" fill="none" stroke="#d0d0d0" stroke-width="1.1"/>
<path d="M30.5,566 L26,569.7 L30.5,573.4" fill="none" stroke="#d0d0d0" stroke-width="1.1"/>
<rect x="35" y="565" width="598" height="9" rx="4.5" fill="#e2e2e2"/>
<path d="M1063.6,565.6 L1068.2,569.5 L1063.6,573.4" fill="none" stroke="#d0d0d0" stroke-width="1.1"/>
<rect x="1073" y="560.4" width="17" height="17.4" fill="#f8f8f8"/>
<rect x="1025" y="217.2" width="32.5" height="15.2" rx="7.6" fill="#fff" stroke="#dcdcdc" stroke-width="1"/>
<path d="M1035.5,222 L1041.2,227.2 L1047,222" fill="none" stroke="#9a9a9a" stroke-width="1.6"/>
<!-- bottom -->
<circle cx="26.2" cy="598.5" r="1.1" fill="#333"/>
<circle cx="26.2" cy="603.3" r="1.1" fill="#333"/>
<circle cx="26.2" cy="608.1" r="1.1" fill="#333"/>
</svg><div class="t" style="left:63.50px;top:595.82px;font-size:13.5px;color:#2a2a2a;font-weight:normal;-webkit-text-stroke:0.35px #2a2a2a;letter-spacing:0.28px">Obroty na kontach</div><div class="a" style="left:62px;top:617px;width:119px;height:2px;background:#0a8ad6"></div></div></div>
</body></html>
